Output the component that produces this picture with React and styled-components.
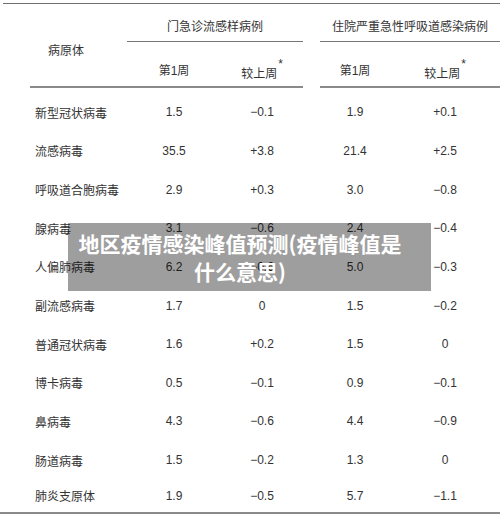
import React from "react";
import styled, { createGlobalStyle } from "styled-components";

const GlobalStyle = createGlobalStyle`
  html, body {
    margin: 0;
    padding: 0;
    background: #ffffff;
  }
  body {
    font-family: "Liberation Sans", "Noto Sans CJK SC", sans-serif;
    color: #333333;
  }
`;

const COLS = "127px 94px 82px 17px 70px 110px";

const Page = styled.div`
  position: relative;
  width: 500px;
  height: 518px;
  overflow: hidden;
`;

const Table = styled.div`
  margin-left: 3px;
  margin-top: 3px;
  width: 497px;
  border-top: 1.5px solid #6e6e6e;
`;

const Head = styled.div`
  display: grid;
  grid-template-columns: ${COLS};
  grid-template-rows: 38px 46px;
  margin-left: -3px;
  width: 500px;
`;

const NameHead = styled.div`
  grid-column: 1;
  grid-row: 1 / span 2;
  margin-left: 30px;
  padding-left: 18px;
  padding-top: 8px;
  display: flex;
  align-items: center;
  font-size: 12px;
  border-bottom: 2px solid #8a8a8a;
`;

const GroupHead = styled.div`
  grid-column: ${(p) => p.$col};
  grid-row: 1;
  display: flex;
  align-items: center;
  justify-content: center;
  padding-top: 5px;
  font-size: 12px;
  border-bottom: 1.5px solid #777777;
`;

const SubHead = styled.div`
  grid-column: ${(p) => p.$col};
  grid-row: 2;
  display: flex;
  align-items: center;
  justify-content: center;
  padding-top: ${(p) => (p.$star ? "17px" : "10px")};
  font-size: 12px;
  border-bottom: 2px solid #8a8a8a;
`;

const Star = styled.span`
  font-size: 12px;
  line-height: 0;
  position: relative;
  top: -9px;
  margin-left: 1px;
`;

const Body = styled.div`
  padding-top: 5px;
  margin-left: -3px;
  width: 500px;
  border-bottom: 2px solid #8a8a8a;
`;

const Row = styled.div`
  display: grid;
  grid-template-columns: ${COLS};
  height: ${(p) => (p.$last ? "33px" : "38.65px")};
  align-items: center;
  font-size: 12px;
  color: #333333;
`;

const Name = styled.div`
  padding-left: 35px;
`;

const Cell = styled.div`
  grid-column: ${(p) => p.$col};
  text-align: center;
`;

const Overlay = styled.div`
  position: absolute;
  left: 68px;
  top: 223px;
  width: 363px;
  height: 68px;
  box-sizing: border-box;
  padding: 0 25px 0 6px;
  background: rgba(0, 0, 0, 0.38);
  display: flex;
  align-items: center;
  justify-content: center;
  text-align: center;
  color: #ffffff;
  font-family: "Noto Sans CJK SC", sans-serif;
  font-weight: 700;
  font-size: 21px;
  line-height: 28px;
  white-space: nowrap;
`;

const rows = [
  ["新型冠状病毒", "1.5", "−0.1", "1.9", "+0.1"],
  ["流感病毒", "35.5", "+3.8", "21.4", "+2.5"],
  ["呼吸道合胞病毒", "2.9", "+0.3", "3.0", "−0.8"],
  ["腺病毒", "3.1", "−0.6", "2.4", "−0.4"],
  ["人偏肺病毒", "6.2", "−0.6", "5.0", "−0.3"],
  ["副流感病毒", "1.7", "0", "1.5", "−0.2"],
  ["普通冠状病毒", "1.6", "+0.2", "1.5", "0"],
  ["博卡病毒", "0.5", "−0.1", "0.9", "−0.1"],
  ["鼻病毒", "4.3", "−0.6", "4.4", "−0.9"],
  ["肠道病毒", "1.5", "−0.2", "1.3", "0"],
  ["肺炎支原体", "1.9", "−0.5", "5.7", "−1.1"],
];

const valueCols = [2, 3, 5, 6];

export default function App() {
  return (
    <>
      <GlobalStyle />
      <Page>
        <Table>
          <Head>
            <NameHead>病原体</NameHead>
            <GroupHead $col="2 / span 2">门急诊流感样病例</GroupHead>
            <GroupHead $col="5 / span 2">住院严重急性呼吸道感染病例</GroupHead>
            <SubHead $col={2}>第1周</SubHead>
            <SubHead $col={3} $star>
              较上周<Star>*</Star>
            </SubHead>
            <SubHead $col={5}>第1周</SubHead>
            <SubHead $col={6} $star>
              较上周<Star>*</Star>
            </SubHead>
          </Head>
          <Body>
            {rows.map((r, i) => (
              <Row key={r[0]} $last={i === rows.length - 1}>
                <Name>{r[0]}</Name>
                {r.slice(1).map((v, j) => (
                  <Cell key={j} $col={valueCols[j]}>
                    {v}
                  </Cell>
                ))}
              </Row>
            ))}
          </Body>
        </Table>
        <Overlay>
          地区疫情感染峰值预测(疫情峰值是
          <br />
          什么意思)
        </Overlay>
      </Page>
    </>
  );
}
